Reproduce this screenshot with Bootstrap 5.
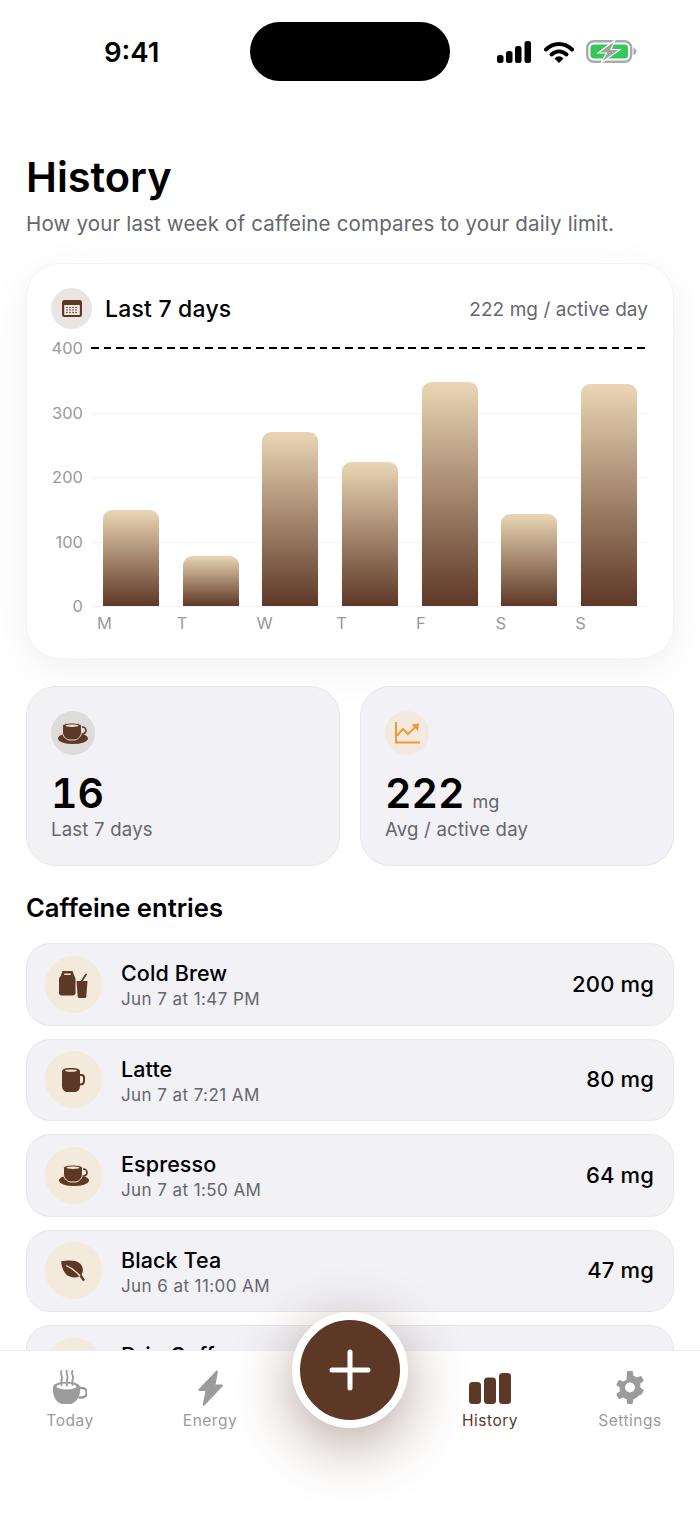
<!doctype html>
<html lang="en">
<head>
<meta charset="utf-8">
<title>History</title>
<link href="https://cdn.jsdelivr.net/npm/bootstrap@5.3.0/dist/css/bootstrap.min.css" rel="stylesheet">
<style>
:root{--brown:#5e3827;--muted:#66666c;--soft:#f1f1f6;--line:#e7e7eb;--axis:#9a9a9e}
html,body{height:1521px;overflow:hidden;background:#fff}
body{font-family:Inter,"Noto Sans",sans-serif;color:#000;position:relative;width:700px}
svg{display:block}
.status-bar{height:101px;padding:22px 64px 0 104px}
.clock{font-size:27.5px;font-weight:600;line-height:60px;width:146px;flex:none}
.island{width:200px;height:59px;border-radius:30px;background:#000;flex:none}
.status-icons{margin-left:47px;height:59px;gap:12px;flex:none}
.page{padding:0 26px}
.page-title{font-size:41.5px;font-weight:600;line-height:50px;margin:51px 0 0}
.page-sub{font-size:20.5px;line-height:28px;color:var(--muted);margin:8px 0 0;letter-spacing:.17px;white-space:nowrap}
.chart-card{margin-top:25px;height:396px;border-radius:34px;background:#fff;border:1px solid #f4f4f5;box-shadow:0 10px 44px rgba(0,0,0,.06);padding:24px 25px 0 24px}
.chart-head{height:41px}
.head-dot{width:41px;height:41px;border-radius:50%;background:#e9e5e2}
.head-title{font-size:23px;font-weight:500;margin-left:13px;letter-spacing:.2px;padding-top:2px}
.head-meta{font-size:19px;color:var(--muted);letter-spacing:.05px;padding-top:3px}
.plot-row{margin-top:4px}
.y-axis{width:39px;height:278px;margin-top:5px;padding-right:7px;font-size:16.5px;line-height:20px;color:var(--axis);text-align:right}
.plot{flex:1;height:258px;margin-top:15px;position:relative}
.grid-line{position:absolute;left:0;right:0;height:1px;background:#f3f3f5}
.limit-line{position:absolute;left:1px;right:3px;top:-1px;height:2px;background:repeating-linear-gradient(90deg,#000 0 7.7px,transparent 7.7px 12.7px)}
.bars{position:absolute;left:1px;right:-1px;top:0;bottom:0}
.bar-slot{flex:1}
.bar-fill{width:56px;border-radius:9px 9px 0 0;background:linear-gradient(#ead6b4,#5e3827)}
.x-axis{margin-left:39px;font-size:16.5px;color:var(--axis);line-height:20px;margin-top:-3px}
.x-label{flex:1;padding-left:7px}
.stat-grid{margin-top:27px;gap:20px}
.stat-box{flex:1;height:180px;background:var(--soft);border:1px solid var(--line);border-radius:30px;padding:24px 24px 0}
.stat-dot{width:44px;height:44px;border-radius:50%}
.dot-brown{background:#dedbdb}
.dot-orange{background:#f4e9de}
.stat-value{font-size:41px;font-weight:600;line-height:48px;margin-top:14px;font-variant-numeric:tabular-nums;font-feature-settings:"tnum"}
.stat-unit{font-size:18px;line-height:1;font-weight:400;color:var(--muted);margin-left:8px}
.stat-name{font-size:18.6px;color:var(--muted);line-height:24px;letter-spacing:.2px}
.section-title{font-size:25.6px;font-weight:600;line-height:32px;margin:26px 0 19px}
.entry-list{gap:13px}
.entry-row{height:82.5px;flex:none;background:var(--soft);border:1px solid var(--line);border-radius:24px;padding:0 19px 0 18px}
.entry-dot{width:57px;height:57px;border-radius:50%;background:#f3eadb;margin-right:19px;flex:none}
.entry-text{padding-top:1.5px}
.entry-name{font-size:21.5px;font-weight:500;line-height:27px;letter-spacing:.1px}
.entry-time{font-size:17px;line-height:21px;margin-top:2px;color:var(--muted);letter-spacing:.42px}
.entry-mg{font-size:22px;font-weight:500;letter-spacing:.15px}
.tab-bar{position:absolute;left:0;right:0;top:1350px;bottom:0;background:#fff;border-top:1px solid #eeeef0}
.tab-item{width:140px;height:92px;padding-top:19px;color:#9b9b9b;font-size:15.5px;line-height:20px;letter-spacing:.5px}
.tab-item.is-active{color:var(--brown)}
.tab-art{height:38px;margin-bottom:3px}
.gear-art{padding-top:1px}
.add-btn{position:absolute;left:292px;top:1312px;width:116px;height:116px;border-radius:50%;background:var(--brown);border:8px solid #fff;padding:0;box-shadow:0 16px 60px rgba(94,56,39,.46)}
</style>
</head>
<body>
<div class="status-bar d-flex align-items-start">
  <div class="clock">9:41</div>
  <div class="island"></div>
  <div class="status-icons d-flex align-items-center">
    <svg width="35" height="22" viewBox="0 0 35 22"><rect x="0" y="14" width="6.5" height="8" rx="2.5"/><rect x="9" y="10" width="6.5" height="12" rx="2.5"/><rect x="18" y="5" width="6.5" height="17" rx="2.5"/><rect x="27.500" y="0" width="6.500" height="22" rx="2.500"/></svg>
    <svg width="30" height="22" viewBox="0 0 30 22"><path d="M2 8.500C9.500 1 20.500 1 28 8.500" fill="none" stroke="#000" stroke-width="4" stroke-linecap="round"/><path d="M7.500 13.500C12 9.500 18 9.500 22.500 13.500" fill="none" stroke="#000" stroke-width="4" stroke-linecap="round"/><path d="M10.500 17.500Q15 12.800 19.500 17.500L15 22Z"/></svg>
    <svg width="51" height="23" viewBox="0 0 51 23"><rect x="1.200" y="1.200" width="44" height="20.600" rx="6.500" fill="none" stroke="#a9aaa9" stroke-width="2.400"/><rect x="4.500" y="4.500" width="37.500" height="14" rx="3.500" fill="#34c759"/><path d="M47.500 8v7c1.800-.5 3-1.800 3-3.500S49.300 8.500 47.500 8z" fill="#a9aaa9"/><path d="M29 0 12 13h8.500L15 23 34 9.500h-9z" fill="#a0a1a0" stroke="#fff" stroke-width="1.200"/></svg>
  </div>
</div>

<main class="page">
  <h1 class="page-title">History</h1>
  <p class="page-sub">How your last week of caffeine compares to your daily limit.</p>

  <section class="chart-card">
    <div class="chart-head d-flex align-items-center">
      <div class="head-dot d-flex align-items-center justify-content-center">
        <svg width="20" height="17" viewBox="0 0 20 17"><rect x="0" y="0" width="20" height="17" rx="2.500" fill="#5e3827"/><rect x="2.200" y="5" width="15.600" height="10" fill="#efe9e4"/><g fill="#5e3827"><circle cx="5" cy="7.500" r=".8"/><circle cx="8" cy="7.500" r=".8"/><circle cx="11" cy="7.500" r=".8"/><circle cx="14" cy="7.500" r=".8"/><circle cx="5" cy="10" r=".8"/><circle cx="8" cy="10" r=".8"/><circle cx="11" cy="10" r=".8"/><circle cx="14" cy="10" r=".8"/><circle cx="5" cy="12.500" r=".8"/><circle cx="8" cy="12.500" r=".8"/><circle cx="11" cy="12.500" r=".8"/><circle cx="14" cy="12.500" r=".8"/></g></svg>
      </div>
      <div class="head-title">Last 7 days</div>
      <div class="head-meta ms-auto">222 mg / active day</div>
    </div>
    <div class="plot-row d-flex">
      <div class="y-axis d-flex flex-column justify-content-between"><span>400</span><span>300</span><span>200</span><span>100</span><span>0</span></div>
      <div class="plot">
        <div class="grid-line" style="top:64.500px"></div>
        <div class="grid-line" style="top:129px"></div>
        <div class="grid-line" style="top:193.500px"></div>
        <div class="grid-line" style="top:258px"></div>
        <div class="limit-line"></div>
        <div class="bars d-flex align-items-end">
          <div class="bar-slot d-flex justify-content-center"><div class="bar-fill" style="height:96px"></div></div>
          <div class="bar-slot d-flex justify-content-center"><div class="bar-fill" style="height:50px"></div></div>
          <div class="bar-slot d-flex justify-content-center"><div class="bar-fill" style="height:174px"></div></div>
          <div class="bar-slot d-flex justify-content-center"><div class="bar-fill" style="height:144px"></div></div>
          <div class="bar-slot d-flex justify-content-center"><div class="bar-fill" style="height:224px"></div></div>
          <div class="bar-slot d-flex justify-content-center"><div class="bar-fill" style="height:92px"></div></div>
          <div class="bar-slot d-flex justify-content-center"><div class="bar-fill" style="height:222px"></div></div>
        </div>
      </div>
    </div>
    <div class="x-axis d-flex">
      <span class="x-label">M</span><span class="x-label">T</span><span class="x-label">W</span><span class="x-label">T</span><span class="x-label">F</span><span class="x-label">S</span><span class="x-label">S</span>
    </div>
  </section>

  <div class="stat-grid d-flex">
    <div class="stat-box">
      <div class="stat-dot dot-brown d-flex align-items-center justify-content-center">
        <svg width="30" height="21" viewBox="0 0 30 21"><ellipse cx="15" cy="15.500" rx="15" ry="5.500" fill="#5e3827"/><path d="M23 4h1.500a3.200 3.200 0 0 1 0 7H22" fill="none" stroke="#5e3827" stroke-width="1.700"/><path d="M4.500 3c0-2 4.500-3 9.500-3s9.500 1 9.500 3v6c0 4-3 7-6.500 8h-6c-3.500-1-6.500-4-6.500-8z" fill="#5e3827" stroke="#dedbdb" stroke-width="1"/><ellipse cx="14" cy="2.700" rx="6.500" ry="1.300" fill="#efe6de"/></svg>
      </div>
      <div class="stat-value">16</div>
      <div class="stat-name">Last 7 days</div>
    </div>
    <div class="stat-box">
      <div class="stat-dot dot-orange d-flex align-items-center justify-content-center">
        <svg width="25" height="22" viewBox="0 0 25 22"><path d="M1 0v20.500h24" fill="none" stroke="#f09a35" stroke-width="2"/><path d="M2 13.500 8 7l5 5 7.500-7" fill="none" stroke="#f09a35" stroke-width="2"/><path d="M16.500 2.500 24 1.500 23 9z" fill="#f09a35"/></svg>
      </div>
      <div class="stat-value">222<span class="stat-unit">mg</span></div>
      <div class="stat-name">Avg / active day</div>
    </div>
  </div>

  <h2 class="section-title">Caffeine entries</h2>

  <div class="entry-list d-flex flex-column">
    <div class="entry-row d-flex align-items-center">
      <div class="entry-dot d-flex align-items-center justify-content-center">
        <svg width="29" height="27" viewBox="0 0 29 27"><path d="M3.500 0h10l2 5.500c.7.800 1 1.500 1 3V22c0 1.500-1 2.500-2.500 2.500H2.500C1 24.500 0 23.500 0 22V8.500C0 7 .5 6 1.500 5.500z" fill="#5e3827"/><rect x="5" y="2.500" width="7" height="1.500" rx=".7" fill="#f3eadb"/><path d="M17.500 10h11l-1.200 15.500c-.1 1-.8 1.500-1.700 1.500h-5.200c-1 0-1.600-.5-1.700-1.500z" fill="#5e3827"/><path d="M23 9.500 27 3.500" stroke="#5e3827" stroke-width="1.800" stroke-linecap="round"/></svg>
      </div>
      <div class="entry-text"><div class="entry-name">Cold Brew</div><div class="entry-time">Jun 7 at 1:47 PM</div></div>
      <div class="entry-mg ms-auto">200 mg</div>
    </div>
    <div class="entry-row d-flex align-items-center">
      <div class="entry-dot d-flex align-items-center justify-content-center">
        <svg width="23" height="24" viewBox="0 0 23 24"><path d="M0 4C0 1 2 0 9 0s9 1 9 4v14c0 3.500-2.500 6-5 6H5c-2.500 0-5-2.500-5-6z" fill="#5e3827"/><ellipse cx="9" cy="2.600" rx="6" ry="1.100" fill="#f3eadb"/><path d="M18 7h1.500c1.500 0 2.500 1 2.500 2.500V13c0 2-1.500 3.500-4 3.500" fill="none" stroke="#5e3827" stroke-width="2"/></svg>
      </div>
      <div class="entry-text"><div class="entry-name">Latte</div><div class="entry-time">Jun 7 at 7:21 AM</div></div>
      <div class="entry-mg ms-auto">80 mg</div>
    </div>
    <div class="entry-row d-flex align-items-center">
      <div class="entry-dot d-flex align-items-center justify-content-center">
        <svg width="30" height="21" viewBox="0 0 30 21"><ellipse cx="15" cy="15.500" rx="15" ry="5.500" fill="#5e3827"/><path d="M23 4h1.500a3.200 3.200 0 0 1 0 7H22" fill="none" stroke="#5e3827" stroke-width="1.700"/><path d="M4.500 3c0-2 4.500-3 9.500-3s9.500 1 9.500 3v6c0 4-3 7-6.500 8h-6c-3.500-1-6.500-4-6.500-8z" fill="#5e3827" stroke="#f3eadb" stroke-width="1"/><ellipse cx="14" cy="2.700" rx="6.500" ry="1.300" fill="#f3eadb"/></svg>
      </div>
      <div class="entry-text"><div class="entry-name">Espresso</div><div class="entry-time">Jun 7 at 1:50 AM</div></div>
      <div class="entry-mg ms-auto">64 mg</div>
    </div>
    <div class="entry-row d-flex align-items-center">
      <div class="entry-dot d-flex align-items-center justify-content-center">
        <svg width="25" height="22" viewBox="0 0 25 22"><path d="M0 1.500C6 .5 14-.5 19 3.500c3.500 3 3.500 8 1.500 11l3.500 5.500-2 1.200-3.500-5c-3.500 2-9 1.500-13-1.500C2.500 12 .8 7 0 1.500z" fill="#5e3827"/><path d="M5 5.500c4 1.500 9 5 14 10.500" fill="none" stroke="#f3eadb" stroke-width="1.300"/></svg>
      </div>
      <div class="entry-text"><div class="entry-name">Black Tea</div><div class="entry-time">Jun 6 at 11:00 AM</div></div>
      <div class="entry-mg ms-auto">47 mg</div>
    </div>
    <div class="entry-row d-flex align-items-center">
      <div class="entry-dot"></div>
      <div class="entry-text"><div class="entry-name">Drip Coffee</div><div class="entry-time">Jun 6 at 8:15 AM</div></div>
      <div class="entry-mg ms-auto">95 mg</div>
    </div>
  </div>
</main>

<nav class="tab-bar d-flex">
  <div class="tab-item d-flex flex-column align-items-center">
    <div class="tab-art"><svg width="34" height="35" viewBox="0 0 34 35"><path d="M8.500 1c-2 3 2 5 0 9M14 0c-2 3 2 5.500 0 10M19.500 1c-2 3 2 5 0 9" fill="none" stroke="#9b9b9b" stroke-width="1.800" stroke-linecap="round"/><path d="M0 17c0-3 5-5 13.500-5S27 14 27 17v4c0 7-6 13-10 13h-7C5 34 0 28 0 21z" fill="#9b9b9b"/><path d="M27 18h2a4 4 0 0 1 0 9.500h-3.500" fill="none" stroke="#9b9b9b" stroke-width="2.600"/><ellipse cx="13.500" cy="16.500" rx="10" ry="3" fill="#fff"/><path d="M8.500 10v5M14 10v5.500M19.500 10v5" stroke="#9b9b9b" stroke-width="1.800" stroke-linecap="round"/></svg></div>
    <div>Today</div>
  </div>
  <div class="tab-item d-flex flex-column align-items-center">
    <div class="tab-art"><svg width="25" height="36" viewBox="0 0 25 36"><path d="M17.500 1.500c.7-1.500 2.500-1 2.300.7l-2.200 12.300h6c1 0 1.500 1 1 1.800L7 35c-1 1.300-2.500.5-2.200-1L7.500 21H1.500c-1 0-1.500-1-1-1.800z" fill="#9b9b9b"/></svg></div>
    <div>Energy</div>
  </div>
  <div class="tab-item" aria-hidden="true"></div>
  <div class="tab-item is-active d-flex flex-column align-items-center">
    <div class="tab-art"><svg width="42" height="31" viewBox="0 0 42 31" style="margin-top:3px"><rect x="0" y="9" width="12" height="22" rx="3.500" fill="#5e3827"/><rect x="15" y="4.500" width="12" height="26.500" rx="3.500" fill="#5e3827"/><rect x="30" y="0" width="12" height="31" rx="3.500" fill="#5e3827"/></svg></div>
    <div>History</div>
  </div>
  <div class="tab-item d-flex flex-column align-items-center">
    <div class="tab-art gear-art"><svg width="34" height="34" viewBox="0 0 34 34"><path fill-rule="evenodd" fill="#9b9b9b" d="M14 1.200C14 .5 14.500 0 15.200 0h3.600c.7 0 1.200.5 1.200 1.200l.4 3.600c1.200.4 2.300 1 3.300 1.800l3.300-1.400c.6-.3 1.300 0 1.600.5l1.800 3.100c.3.600.2 1.300-.3 1.700l-2.900 2.100c.2 1.200.2 2.600 0 3.800l2.900 2.100c.5.400.6 1.100.3 1.700l-1.800 3.100c-.3.500-1 .8-1.600.5L23.700 26.400c-1 .8-2.100 1.400-3.300 1.800l-.4 3.600c0 .7-.5 1.200-1.200 1.200h-3.600c-.7 0-1.200-.5-1.200-1.200l-.4-3.600c-1.200-.4-2.300-1-3.300-1.800l-3.300 1.400c-.6.300-1.300 0-1.600-.5l-1.800-3.100c-.3-.6-.2-1.300.3-1.700l2.900-2.100c-.2-1.200-.2-2.600 0-3.800L3.900 14.500c-.5-.4-.6-1.100-.3-1.700l1.800-3.100c.3-.5 1-.8 1.600-.5l3.300 1.400c1-.8 2.100-1.400 3.300-1.800zM17 11.500a5 5 0 1 0 0 10 5 5 0 0 0 0-10z"/></svg></div>
    <div>Settings</div>
  </div>
</nav>

<button class="add-btn btn d-flex align-items-center justify-content-center" type="button" aria-label="Add entry">
  <svg width="42" height="42" viewBox="0 0 42 42"><path d="M21 3v36M3 21h36" stroke="#fff" stroke-width="5" stroke-linecap="round"/></svg>
</button>

<script src="https://cdn.jsdelivr.net/npm/bootstrap@5.3.0/dist/js/bootstrap.bundle.min.js"></script>
</body>
</html>
